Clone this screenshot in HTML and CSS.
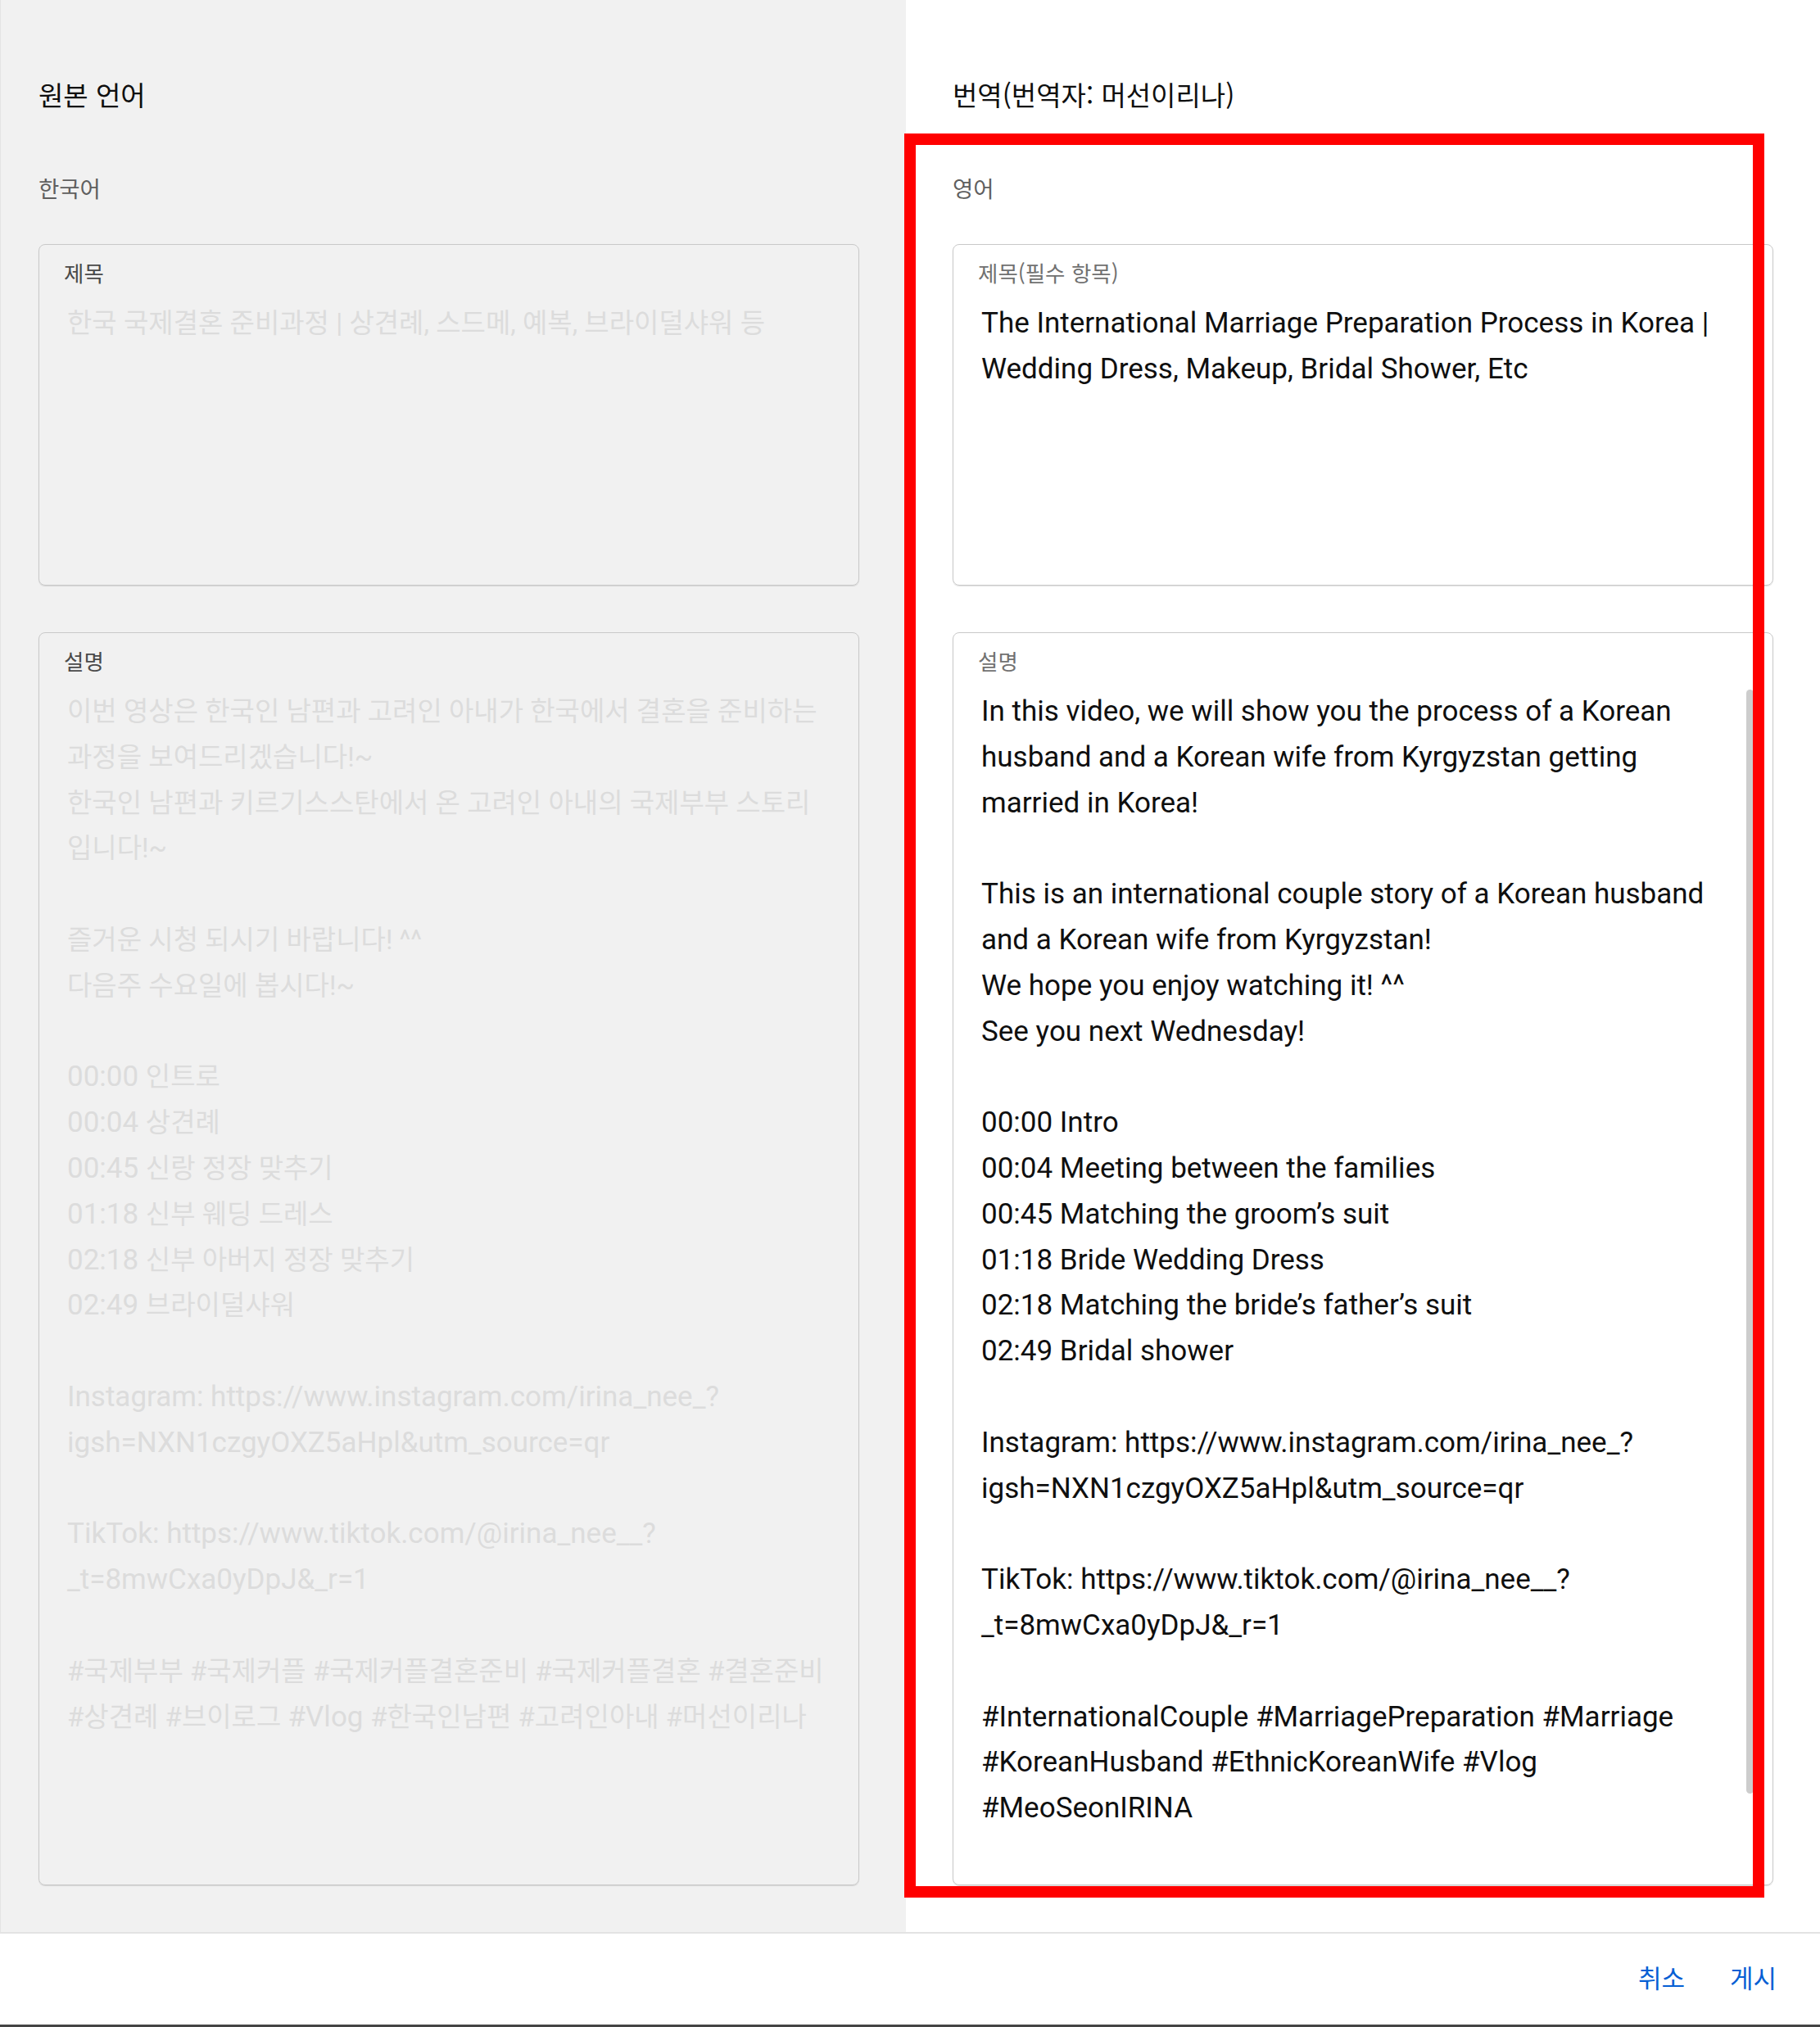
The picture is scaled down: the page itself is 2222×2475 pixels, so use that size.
FILE: index.html
```html
<!DOCTYPE html>
<html lang="ko">
<head>
    <meta charset="UTF-8">
    <meta name="viewport" content="width=device-width, initial-scale=1.0">
    <title>번역 편집</title>
    <link rel="stylesheet" href="styles.css">
</head>
<body>
    <div class="editor">
        <section class="pane pane-source">
            <h2 class="pane-title">원본 언어</h2>
            <div class="lang">한국어</div>

            <div class="field field-title">
                <div class="field-label">제목</div>
                <div class="field-text placeholder">한국 국제결혼 준비과정 | 상견례, 스드메, 예복, 브라이덜샤워 등</div>
            </div>

            <div class="field field-desc">
                <div class="field-label">설명</div>
                <div class="field-text placeholder">
                    <div class="ln">이번 영상은 한국인 남편과 고려인 아내가 한국에서 결혼을 준비하는</div>
                    <div class="ln">과정을 보여드리겠습니다!~</div>
                    <div class="ln">한국인 남편과 키르기스스탄에서 온 고려인 아내의 국제부부 스토리</div>
                    <div class="ln">입니다!~</div>
                    <div class="ln"></div>
                    <div class="ln">즐거운 시청 되시기 바랍니다! ^^</div>
                    <div class="ln">다음주 수요일에 봅시다!~</div>
                    <div class="ln"></div>
                    <div class="ln"><span class="lat">00:00 </span>인트로</div>
                    <div class="ln"><span class="lat">00:04 </span>상견례</div>
                    <div class="ln"><span class="lat">00:45 </span>신랑 정장 맞추기</div>
                    <div class="ln"><span class="lat">01:18 </span>신부 웨딩 드레스</div>
                    <div class="ln"><span class="lat">02:18 </span>신부 아버지 정장 맞추기</div>
                    <div class="ln"><span class="lat">02:49 </span>브라이덜샤워</div>
                    <div class="ln"></div>
                    <div class="ln lat">Instagram: https://www.instagram.com/irina_nee_?</div>
                    <div class="ln lat">igsh=NXN1czgyOXZ5aHpl&amp;utm_source=qr</div>
                    <div class="ln"></div>
                    <div class="ln lat">TikTok: https://www.tiktok.com/@irina_nee__?</div>
                    <div class="ln lat">_t=8mwCxa0yDpJ&amp;_r=1</div>
                    <div class="ln"></div>
                    <div class="ln">#국제부부 #국제커플 #국제커플결혼준비 #국제커플결혼 #결혼준비</div>
                    <div class="ln">#상견례 #브이로그 <span class="lat">#Vlog </span>#한국인남편 #고려인아내 #머선이리나</div>
                </div>
            </div>
        </section>

        <section class="pane pane-target">
            <h2 class="pane-title">번역(번역자: 머선이리나)</h2>
            <div class="lang">영어</div>

            <div class="field field-title">
                <div class="field-label light">제목(필수 항목)</div>
<div class="field-text prose">The International Marriage Preparation Process in Korea |
Wedding Dress, Makeup, Bridal Shower, Etc</div>
            </div>

            <div class="field field-desc">
                <div class="field-label light">설명</div>
<div class="field-text prose">In this video, we will show you the process of a Korean
husband and a Korean wife from Kyrgyzstan getting
married in Korea!

This is an international couple story of a Korean husband
and a Korean wife from Kyrgyzstan!
We hope you enjoy watching it! ^^
See you next Wednesday!

00:00 Intro
00:04 Meeting between the families
00:45 Matching the groom’s suit
01:18 Bride Wedding Dress
02:18 Matching the bride’s father’s suit
02:49 Bridal shower

Instagram: https://www.instagram.com/irina_nee_?
igsh=NXN1czgyOXZ5aHpl&amp;utm_source=qr

TikTok: https://www.tiktok.com/@irina_nee__?
_t=8mwCxa0yDpJ&amp;_r=1

#InternationalCouple #MarriagePreparation #Marriage
#KoreanHusband #EthnicKoreanWife #Vlog
#MeoSeonIRINA</div>
                <div class="scroll-thumb"></div>
            </div>
        </section>
    </div>

    <footer class="actions">
        <button class="text-btn">취소</button>
        <button class="text-btn">게시</button>
    </footer>

    <!-- annotation drawn over the translation column -->
    <div class="highlight"></div>
</body>
</html>
```

FILE: styles.css
```css
* {
    box-sizing: border-box;
}

body {
    margin: 0;
    background-color: #ffffff;
    font-family: Roboto, "Noto Sans CJK KR", sans-serif;
    color: #0f0f0f;
    position: relative;
}

.editor {
    display: grid;
    grid-template-columns: 1106px 1fr;
    height: 2359px;
}

.pane {
    padding: 95px 57px 0 57px;
}

.pane-source {
    background-color: #f1f1f1;
    padding-left: 46px;
    border-left: 1px solid #e4e4e4;
}

.pane-target {
    background-color: #ffffff;
}

.pane-title {
    margin: 0;
    font-family: "Noto Sans CJK KR", sans-serif;
    font-size: 33px;
    font-weight: 400;
    line-height: 40px;
    color: #0f0f0f;
}

.lang {
    margin-top: 76px;
    font-family: "Noto Sans CJK KR", sans-serif;
    font-size: 27.5px;
    line-height: 36px;
    color: #5f5f5f;
}

.field {
    position: relative;
    width: 1002px;
    border: 1px solid #c9c9c9;
    border-radius: 8px;
    box-shadow: 0 1px 1px rgba(0, 0, 0, 0.12);
    padding: 19px 30px 0 30px;
}

.field-title {
    margin-top: 51px;
    height: 417px;
}

.field-desc {
    margin-top: 57px;
    height: 1530px;
}

.field-label {
    font-family: "Noto Sans CJK KR", sans-serif;
    font-size: 26.5px;
    line-height: 30px;
    color: #4a4a4a;
}

.field-label.light {
    color: #717171;
}

.field-text {
    margin-top: 19px;
    padding-left: 4px;
    font-size: 35px;
    line-height: 55.8px;
    color: #0f0f0f;
}

.field-text.prose {
    white-space: pre-line;
}

.field-text.placeholder {
    color: #dcdcdc;
    font-size: 33px;
}

.ln {
    min-height: 55.8px;
    white-space: nowrap;
}

.field-text .lat {
    font-size: 35px;
}

.scroll-thumb {
    position: absolute;
    top: 69px;
    right: 23px;
    width: 9px;
    height: 1348px;
    border-radius: 5px;
    background-color: #cdcdcd;
}

.actions {
    display: flex;
    justify-content: flex-end;
    align-items: center;
    gap: 55px;
    height: 116px;
    padding-right: 53px;
    padding-bottom: 6px;
    border-top: 2px solid #e3e3e3;
    border-bottom: 3px solid #444444;
}

.text-btn {
    background: none;
    border: none;
    padding: 0;
    font-family: "Noto Sans CJK KR", sans-serif;
    font-size: 31px;
    line-height: 40px;
    color: #065fd4;
    cursor: pointer;
}

.highlight {
    position: absolute;
    left: 1104px;
    top: 163px;
    width: 1050px;
    height: 2154px;
    border: 14px solid #ff0000;
}
```
